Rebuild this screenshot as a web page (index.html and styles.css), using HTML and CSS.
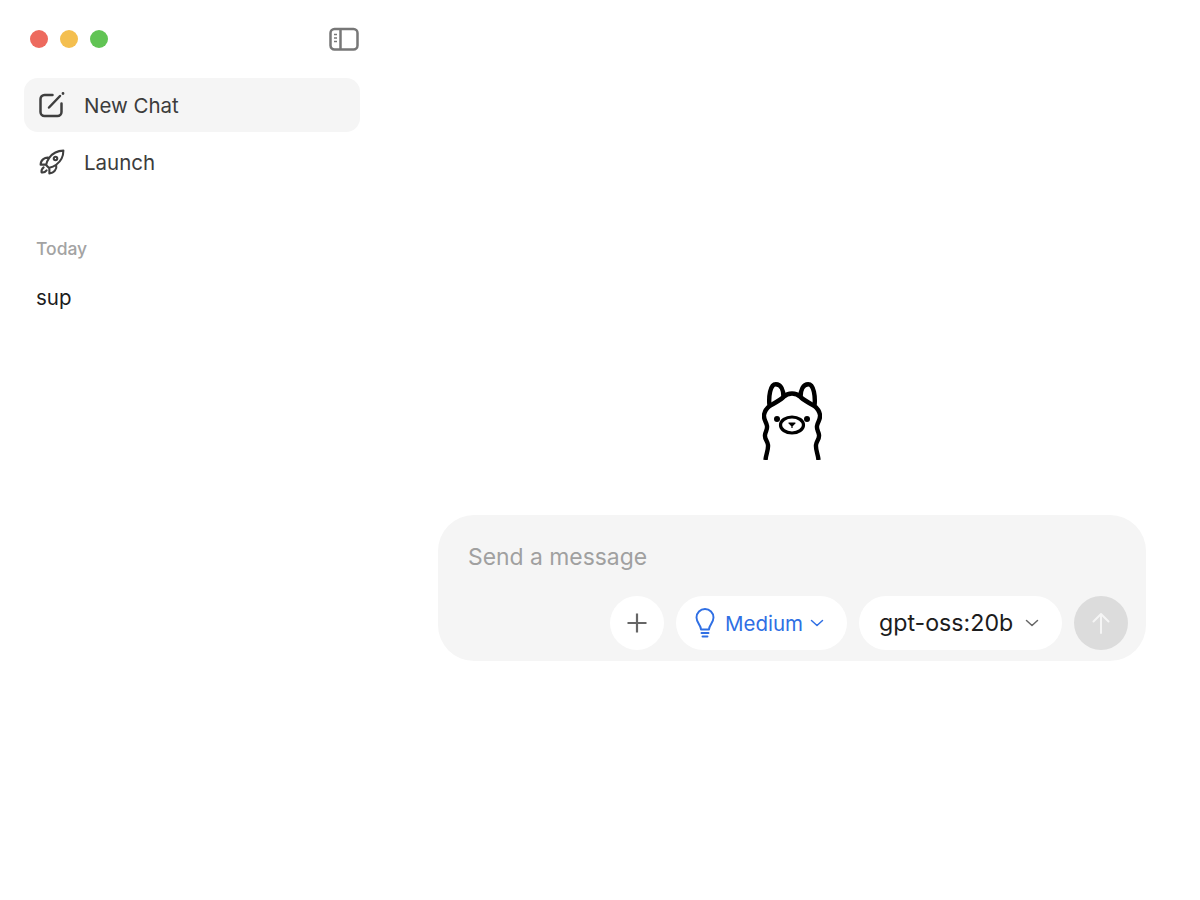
FILE: index.html
```html
<!DOCTYPE html>
<html lang="en">
<head>
<meta charset="utf-8">
<title>Ollama</title>
<link rel="stylesheet" href="styles.css">
</head>
<body>
<div class="app">
  <aside class="sidebar">
    <div class="titlebar">
      <div class="lights">
        <span class="light red"></span>
        <span class="light yellow"></span>
        <span class="light green"></span>
      </div>
      <svg class="toggle" width="30" height="24" viewBox="0 0 30 24" fill="none" stroke="#777" stroke-width="2.500">
        <rect x="1.500" y="2" width="27" height="20.500" rx="4"/>
        <path d="M11.500 2v20.500"/>
        <path d="M5 7.500h3M5 11h3M5 14.500h3" stroke-width="1.600"/>
      </svg>
    </div>
    <nav class="nav">
      <div class="nav-item active">
        <svg class="nav-icon" width="28" height="28" viewBox="0 0 28 28" fill="none" stroke="#3f3f3f" stroke-width="2.500" stroke-linecap="round">
          <path d="M14.500 4H6.500A4 4 0 0 0 2.500 8v13a4 4 0 0 0 4 4h13a4 4 0 0 0 4-4V12.500"/>
          <path d="M11 16.500 22 5"/>
          <circle cx="25" cy="2.500" r=".7" stroke-width="1.400"/>
        </svg>
        <span>New Chat</span>
      </div>
      <div class="nav-item">
        <svg class="nav-icon" width="28" height="28" viewBox="0 0 24 24" fill="none" stroke="#3f3f3f" stroke-width="1.800" stroke-linecap="round" stroke-linejoin="round">
          <path d="M15.590 14.370a6 6 0 0 1-5.840 7.380v-4.800m5.840-2.580a14.980 14.980 0 0 0 6.160-12.120A14.980 14.980 0 0 0 9.631 8.410m5.960 5.960a14.926 14.926 0 0 1-5.841 2.580m-.119-8.540a6 6 0 0 0-7.381 5.840h4.800m2.581-5.840a14.927 14.927 0 0 0-2.580 5.840m2.699 2.700c-.103.021-.207.041-.311.060a15.090 15.090 0 0 1-2.448-2.448 14.900 14.900 0 0 1 .060-.312m-2.240 2.390a4.493 4.493 0 0 0-1.757 4.306 4.493 4.493 0 0 0 4.306-1.758M16.500 9a1.500 1.500 0 1 1-3 0 1.500 1.500 0 0 1 3 0Z"/>
        </svg>
        <span>Launch</span>
      </div>
    </nav>
    <div class="history">
      <div class="history-label">Today</div>
      <div class="history-item">sup</div>
    </div>
  </aside>
  <main class="main">
    <svg class="llama" width="60" height="78" viewBox="0 0 60 78" fill="none" stroke="#000" stroke-width="4.400" stroke-linecap="butt" stroke-linejoin="round">
      <path d="M3.500 78C4 72 6.500 68 6 63 5.500 59 2.500 57 3 53 3.500 49 5.500 48 5 44 4.500 40 1.500 38 2 33 2.500 29 4 27 7.500 24 6.500 15 8 2.200 13.800 2.200 19 2.200 21.500 8 21.500 15 24 12.500 27 11.500 30 11.500 33 11.500 36 12.500 38.500 15 38.500 8 41 2.200 46.200 2.200 52 2.200 53.500 15 52.500 24 56 27 57.500 29 58 33 58.500 38 55.500 40 55 44 54.500 48 56.500 49 57 53 57.500 57 54.500 59 54 63 53.500 68 56 72 56.500 78"/>
      <path d="M7.500 24C12 21.500 17 19 21.500 15M38.500 15C43 19 48 21.500 52.500 24"/>
      <ellipse cx="30" cy="43" rx="11.500" ry="8" stroke-width="3.200"/>
      <circle cx="15" cy="37" r="3" fill="#000" stroke="none"/>
      <circle cx="45" cy="37" r="3" fill="#000" stroke="none"/>
      <path d="M27 41h6l-3 3zM30 43v3" fill="#000" stroke-width="1.200"/>
    </svg>
    <section class="composer">
      <div class="placeholder">Send a message</div>
      <div class="controls">
        <button class="circle plus" type="button">
          <svg width="22" height="22" viewBox="0 0 22 22" fill="none" stroke="#666" stroke-width="2.200"><path d="M11 1.500v19M1.500 11h19"/></svg>
        </button>
        <button class="pill think" type="button">
          <svg width="20" height="30" viewBox="0 0 20 30" fill="none" stroke="#2f6fe4" stroke-width="1.900" stroke-linecap="round" stroke-linejoin="round">
            <path d="M6 21.500C6 17 1.500 15 1.500 9.500A8.500 8.500 0 0 1 18.500 9.500C18.500 15 14 17 14 21.500Z"/>
            <path d="M6.500 25h7M7.500 28.500h5"/>
          </svg>
          <span>Medium</span>
          <svg class="chev" width="14" height="8" viewBox="0 0 14 8" fill="none" stroke="#2f6fe4" stroke-width="1.500" stroke-linecap="round" stroke-linejoin="round"><path d="M1.500 1.500 7 6.500l5.500-5"/></svg>
        </button>
        <button class="pill model" type="button">
          <span>gpt-oss:20b</span>
          <svg class="chev" width="14" height="8" viewBox="0 0 14 8" fill="none" stroke="#666" stroke-width="1.500" stroke-linecap="round" stroke-linejoin="round"><path d="M1.500 1.500 7 6.500l5.500-5"/></svg>
        </button>
        <button class="circle send" type="button">
          <svg width="20" height="22" viewBox="0 0 20 22" fill="none" stroke="#f5f5f5" stroke-width="2" stroke-linecap="round" stroke-linejoin="round"><path d="M10 21V2M2.500 9.500 10 2l7.500 7.500"/></svg>
        </button>
      </div>
    </section>
  </main>
</div>
</body>
</html>
```
FILE: styles.css
```css
* { box-sizing: border-box; }
html, body { margin: 0; height: 100%; background: #fff; }
body { font-family: Inter, "Liberation Sans", sans-serif; color: #1c1c1c; }
.app { display: flex; height: 900px; overflow: hidden; }
.sidebar { width: 384px; flex: none; padding: 0 24px; }
.titlebar { height: 78px; display: flex; align-items: center; justify-content: space-between; padding: 0 1px 0 6px; }
.lights { display: flex; gap: 12px; }
.light { width: 18px; height: 18px; border-radius: 50%; }
.red { background: #ed6a5e; }
.yellow { background: #f4bf4f; }
.green { background: #61c454; }
.nav { display: flex; flex-direction: column; gap: 3px; }
.nav-item { height: 54px; display: flex; align-items: center; gap: 18px; padding-left: 14px; border-radius: 14px; font-size: 20.500px; letter-spacing: -.02px; color: #3c3c3c; }
.nav-item.active { background: #f5f5f5; }
.nav-icon { flex: none; }
.history { padding: 48px 0 0 12px; }
.history-label { font-size: 17.500px; font-weight: 500; color: #a3a3a3; line-height: 24px; }
.history-item { font-size: 20.500px; color: #1c1c1c; line-height: 28px; margin-top: 23px; }
.main { flex: 1; display: flex; flex-direction: column; align-items: center; padding-top: 382px; }
.llama { display: block; flex: none; }
.composer { width: 708px; height: 146px; margin-top: 55px; border-radius: 36px; background: #f5f5f5; padding: 26px 18px 11px 30px; display: flex; flex-direction: column; justify-content: space-between; }
.placeholder { font-size: 22.900px; line-height: 32px; color: #a0a0a0; }
.controls { display: flex; justify-content: flex-end; gap: 12px; }
button { border: 0; margin: 0; padding: 0; font: inherit; background: #fff; display: flex; align-items: center; }
.circle { width: 54px; height: 54px; border-radius: 50%; justify-content: center; }
.send { background: #dcdcdc; }
.pill { height: 54px; border-radius: 27px; }
.think { width: 171px; padding-left: 19px; font-size: 20.500px; font-weight: 400; color: #2f6fe4; gap: 10px; }
.think .chev { margin-left: -3px; }
.model { width: 203px; padding-left: 20px; font-size: 23.200px; color: #1c1c1c; gap: 12px; }
```
